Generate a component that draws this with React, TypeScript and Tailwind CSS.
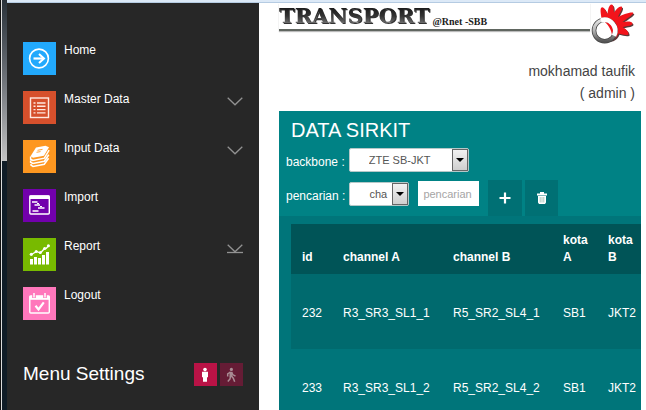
import React from "react";

const HomeIcon = () => (
  <svg viewBox="0 0 33 33" className="size-full" fill="none" stroke="#fff" strokeWidth="1.6">
    <circle cx="16" cy="16.5" r="9.4" />
    <path d="M10.5 16.5h9.5" strokeWidth="2.2" />
    <path d="M16 12l5 4.5-5 4.5" strokeWidth="2" />
  </svg>
);

const ListIcon = () => (
  <svg viewBox="0 0 33 33" className="size-full" fill="none" stroke="#ffe9e0" strokeWidth="1.4">
    <rect x="7.5" y="7" width="18" height="19.5" />
    <path d="M14 12h8.5M14 15.3h8.5M14 18.6h8.5M14 21.9h8.5" />
    <path d="M10.5 12h2M10.5 15.3h2M10.5 18.6h2M10.5 21.9h2" />
  </svg>
);

const BooksIcon = () => (
  <svg viewBox="0 0 33 33" className="size-full">
    <path d="M13 7.500l9.500-1.700 3.500 1.500-5 8.500-11 2-2.500-1.500z" fill="#fff" />
    <path d="M14.500 10.300l5-.9M13.500 12.300l4-.7" stroke="#fe9720" strokeWidth=".9" />
    <path
      d="M7.600 16.500v2.700l2.200 1.300 11.500-2.300 4.800-8M7.600 20.500v1.700l2.200 1.300 11.500-2.300 4.500-6.500M8 24v1.200l2 1.300 11.300-2.300 4.300-6"
      fill="none"
      stroke="#fff"
      strokeWidth="1.5"
    />
  </svg>
);

const GanttIcon = () => (
  <svg viewBox="0 0 33 33" className="size-full" fill="none" stroke="#fff">
    <rect x="6.8" y="7" width="19.5" height="18" rx="1" strokeWidth="1.4" />
    <path d="M6.5 8.2h20" strokeWidth="3.6" />
    <path d="M9 13h5.5M11.5 16h5.5M15 19h6.5M9.5 22h6" strokeWidth="1.7" />
    <path d="M14 14.5h2M17 17.5h2" strokeWidth="1" />
  </svg>
);

const ChartIcon = () => (
  <svg viewBox="0 0 33 33" className="size-full">
    <path d="M7 21h3v5.5H7zM11 19h3v7.5h-3zM15 20h3v6.5h-3zM19 17h3v9.5h-3zM23 14h3v12.5h-3z" fill="#fff" />
    <path d="M8.5 16.5l5-3 4 1.5 4-4.5h1.5l3-3" fill="none" stroke="#fff" strokeWidth="1.3" />
    <g fill="#fff">
      <circle cx="8.3" cy="16.3" r="1.6" />
      <circle cx="13.2" cy="13.5" r="1.5" />
      <circle cx="17.3" cy="14.5" r="1.5" />
      <circle cx="21.6" cy="10.5" r="1.5" />
      <circle cx="25.4" cy="7.7" r="1.5" />
    </g>
  </svg>
);

const CalendarIcon = () => (
  <svg viewBox="0 0 33 33" className="size-full" fill="none" stroke="#fff">
    <rect x="6.8" y="9" width="19.5" height="17" rx="1" strokeWidth="1.4" />
    <path d="M6.5 10.8h20" strokeWidth="4" />
    <path d="M11 6v5M22 6v5" stroke="#ff77bb" strokeWidth="3.6" />
    <path d="M11 6v4.5M22 6v4.5" strokeWidth="1.5" />
    <path d="M12.5 18.8l3 3.6 5.3-7" strokeWidth="2.2" />
  </svg>
);

const Chevron = ({ underlined = false }: { underlined?: boolean }) => (
  <svg viewBox="0 0 16 10" className="mt-[6px] ml-auto h-[10px] w-4" fill="none" stroke="#929292" strokeWidth="1.3">
    <path d="M.7 .8l7.3 7 7.3-7" />
    {underlined && <path d="M0 8.5h16" />}
  </svg>
);

const menu = [
  { label: "Home", tile: "bg-[#22a9fc]", icon: <HomeIcon /> },
  { label: "Master Data", tile: "bg-[#d6502c]", icon: <ListIcon />, chevron: <Chevron /> },
  { label: "Input Data", tile: "bg-[#fe9720]", icon: <BooksIcon />, chevron: <Chevron /> },
  { label: "Import", tile: "bg-[#7200ac]", icon: <GanttIcon /> },
  { label: "Report", tile: "bg-[#78ba00]", icon: <ChartIcon />, chevron: <Chevron underlined /> },
  { label: "Logout", tile: "bg-[#ff77bb]", icon: <CalendarIcon /> },
];

const Sidebar = () => (
  <aside className="w-[252px] shrink-0 bg-[#272727] px-4 pt-[39px] text-white">
    <nav>
      <ul className="flex flex-col gap-4">
        {menu.map((item) => (
          <li key={item.label}>
            <a href="#" className="flex h-[33px] items-start gap-2 text-xs leading-4">
              <span className={`size-[33px] shrink-0 ${item.tile}`}>{item.icon}</span>
              <span>{item.label}</span>
              {item.chevron}
            </a>
          </li>
        ))}
      </ul>
    </nav>
    <div className="mt-[42px] flex items-center">
      <h2 className="text-[19px] leading-6">Menu Settings</h2>
      <div className="ml-auto flex gap-[3px]">
        <button aria-label="Standing" className="size-[23px] bg-[#b91346]">
          <svg viewBox="0 0 23 23" className="size-full" fill="#fff">
            <circle cx="11" cy="6.6" r="1.8" />
            <path d="M8 8.8h6v5.4h-1v4.6H9v-4.6H8z" />
          </svg>
        </button>
        <button aria-label="Walking" className="size-[23px] bg-[#651c35]">
          <svg viewBox="0 0 23 23" className="size-full" fill="none" stroke="#a98c94" strokeWidth="1.5">
            <circle cx="11.4" cy="6.4" r="1.6" fill="#a98c94" stroke="none" />
            <path d="M11 8.8v5" strokeWidth="3" />
            <path d="M10.5 9l-2.8 2v2.500M11.5 9.500l1.500 2.300 2.500 1.400M10.500 13l-.5 3-2.200 2.500M11.300 13l2 2.200 1.400 3.600" />
          </svg>
        </button>
      </div>
    </div>
  </aside>
);

const handShape =
  "M12 18C11 12 10 7 11 5c2-2 4 1 6.500 6C18 6 19 2 21.500 1.500c2.500 0 2 4 2.500 8 2-3 5-6.500 7.500-6 2 1-1.500 6-3.500 10.500C32 12 39 9 43 9.500c1.500 1.500-4 4.500-10.500 9.500 4-.5 9.500-1 10 1.500 0 2-5 2.500-10 3.500 3 1.500 6.500 4.500 6 7.500-3 1.500-6.500-.5-10-1-1.500 4-5 7-9 7z";

const HandLogo = () => (
  <svg viewBox="0 0 45 42" className="h-[42px] w-[45px] shrink-0">
    <defs>
      <linearGradient id="ring" x1="0" y1="0" x2="0" y2="1">
        <stop offset="0" stopColor="#e4e4e4" />
        <stop offset="0.5" stopColor="#b5b5b5" />
        <stop offset="1" stopColor="#555" />
      </linearGradient>
    </defs>
    <path d={handShape} transform="translate(1 1.2)" fill="#5a3a3a" />
    <path d={handShape} fill="#f2141b" />
    <circle cx="14.700" cy="27.500" r="9" fill="#fff" />
    <path d="M14.500 18.500c6 0 9.500 4 9.200 9.500-.2 2-.7 3.500-1.700 5-.5-6-3-10-7.500-14.500z" fill="#f2141b" />
    <circle cx="14.700" cy="27.500" r="10.700" fill="none" stroke="#444" strokeWidth="4.600" />
    <circle cx="14.700" cy="27.500" r="10.700" fill="none" stroke="url(#ring)" strokeWidth="3" />
    <path d="M11 17.300a11 11 0 0 1 13 15.500" fill="none" stroke="#fff" strokeWidth="4.700" />
  </svg>
);

const Header = () => (
  <header>
    <div className="mr-[6px] flex h-[42px] items-start">
      <div className="flex h-7 flex-1 items-center border-b-2 border-[#606660] shadow-[0_1px_1px_#bbb]">
        <span className="bg-linear-to-b from-[#111] via-[#333] via-50% to-[#999] bg-clip-text font-['DejaVu_Serif',serif] text-[21px] leading-6 font-bold text-transparent drop-shadow-[1px_1px_0_#333]">
          TRANSPORT
        </span>
        <span className="pt-3 pl-[3px] font-['Liberation_Serif',serif] text-[10px] leading-3 font-bold whitespace-nowrap text-[#222]">
          @Rnet -SBB
        </span>
      </div>
      <HandLogo />
    </div>
    <p className="mt-[15px] mr-[6px] text-right text-sm leading-[22px] text-[#444]">
      mokhamad taufik
      <br />( admin )
    </p>
  </header>
);

const Picker = ({ id, width, value }: { id: string; width: string; value: string }) => (
  <div className={`relative h-6 ${width}`}>
    <select
      id={id}
      className="h-6 w-full appearance-none rounded-xs border border-[#b5c8c8] bg-white pl-[19px] text-[11px] text-[#555]"
    >
      <option>{value}</option>
    </select>
    <span className="pointer-events-none absolute inset-y-px right-px flex w-4 items-center justify-center border border-[#666] bg-linear-to-b from-[#f2f2f2] to-[#cfcfcf]">
      <svg viewBox="0 0 8 4" className="h-1 w-2">
        <path d="M0 0h8L4 4z" />
      </svg>
    </span>
  </div>
);

const rows = [
  ["232", "R3_SR3_SL1_1", "R5_SR2_SL4_1", "SB1", "JKT2"],
  ["233", "R3_SR3_SL1_2", "R5_SR2_SL4_2", "SB1", "JKT2"],
];

const DataPanel = () => (
  <section className="mt-[7px] flex-1 bg-[#00757a] text-xs text-white">
    <div className="bg-[#008285] pt-[5px] pl-[7px]">
      <h1 className="pl-[5px] text-xl leading-7">DATA SIRKIT</h1>
      <div className="mt-1 flex items-end gap-1">
        <label htmlFor="backbone" className="leading-5 whitespace-nowrap">
          backbone :
        </label>
        <Picker id="backbone" width="w-[120px]" value="ZTE SB-JKT" />
      </div>
      <div className="mt-2 flex items-end">
        <div className="flex h-9 items-end gap-1 pb-[10px]">
          <label htmlFor="field" className="leading-5 whitespace-nowrap">
            pencarian :
          </label>
          <Picker id="field" width="w-[60px]" value="cha" />
        </div>
        <div className="ml-[9px] flex h-9 items-end pb-[10px]">
          <input
            aria-label="pencarian"
            placeholder="pencarian"
            className="h-[25px] w-[61px] bg-white pl-[5px] text-[11px] text-[#555] placeholder:text-[#a5a5a5]"
          />
        </div>
        <button aria-label="Add" className="ml-[9px] flex h-9 w-[34px] items-center justify-center bg-[#007074]">
          <svg viewBox="0 0 12 12" className="size-3" stroke="#fff" strokeWidth="2.2">
            <path d="M6 .5v11M.5 6h11" />
          </svg>
        </button>
        <button aria-label="Delete" className="ml-[3px] flex h-9 w-[33px] items-center justify-center bg-[#007074]">
          <svg viewBox="0 0 10 12" className="h-3 w-[10px]" fill="#fff">
            <path d="M3 0h4v1.5h3V3.5H0V1.5h3zM1 4h8v6.5L8 12H2L1 10.500z" />
            <path d="M3.200 5v5.500M5 5v5.500M6.800 5v5.500" stroke="#8fb5a5" strokeWidth=".7" />
          </svg>
        </button>
      </div>
    </div>
    <div className="pt-2 pl-3">
      <table className="w-full table-fixed text-left">
        <thead className="bg-[#005457]">
          <tr className="align-bottom leading-[17px]">
            <th className="w-[41px] py-2 pl-[11px]">id</th>
            <th className="w-[110px] py-2 pl-[11px]">channel A</th>
            <th className="w-[110px] py-2 pl-[11px]">channel B</th>
            <th className="w-[45px] py-2 pl-[11px]">kota A</th>
            <th className="py-2 pl-[11px]">kota B</th>
          </tr>
        </thead>
        <tbody>
          {rows.map((row) => (
            <tr key={row[0]} className="h-[75px] odd:bg-[#006a6e]">
              {row.map((cell, i) => (
                <td key={i} className="pt-0.5 pl-[11px]">
                  {cell}
                </td>
              ))}
            </tr>
          ))}
        </tbody>
      </table>
    </div>
  </section>
);

export default function App() {
  return (
    <div className="flex h-screen overflow-hidden bg-white font-['Liberation_Sans',Arial,sans-serif]">
      <div className="flex w-[7px] shrink-0 flex-col border-l border-[#111] bg-[#101c26]">
        <div className="flex-1 border-l border-[#ddd]">
          <div className="h-[161px] bg-linear-to-b from-[#2a323a] via-[#70747a] to-[#c4c4c4]" />
        </div>
      </div>
      <div className="flex min-w-0 flex-1 flex-col">
        <div className="h-[3px] shrink-0 border-b border-[#b5cbe2] bg-[#dce9f7]" />
        <div className="flex min-h-0 flex-1">
          <Sidebar />
          <main className="flex min-w-0 flex-1 flex-col pr-[5px] pl-5">
            <Header />
            <DataPanel />
          </main>
        </div>
      </div>
    </div>
  );
}
